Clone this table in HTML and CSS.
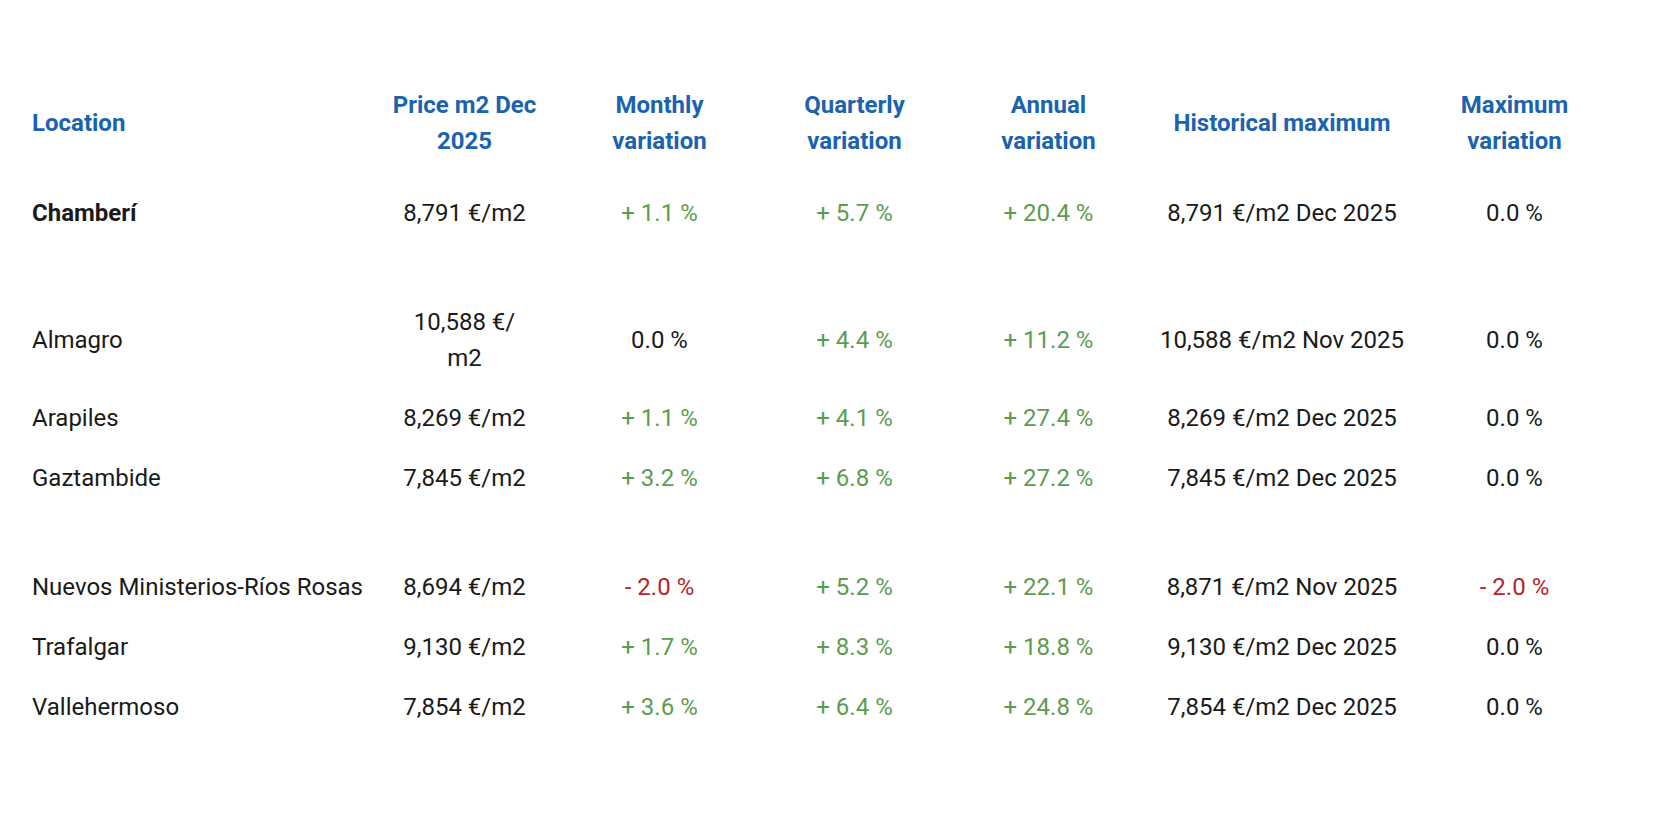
FILE: index.html
```html
<!DOCTYPE html>
<html lang="en">
<head>
<meta charset="utf-8">
<title>Chamberí prices</title>
<link rel="stylesheet" href="styles.css">
</head>
<body>
<table class="prices">
  <colgroup>
    <col class="c-loc">
    <col class="c-price">
    <col class="c-month">
    <col class="c-quarter">
    <col class="c-annual">
    <col class="c-hist">
    <col class="c-max">
  </colgroup>
  <thead>
    <tr class="head">
      <th class="loc">Location</th>
      <th>Price m2 Dec<br>2025</th>
      <th>Monthly<br>variation</th>
      <th>Quarterly<br>variation</th>
      <th>Annual<br>variation</th>
      <th>Historical maximum</th>
      <th>Maximum<br>variation</th>
    </tr>
  </thead>
  <tbody>
    <tr class="row district">
      <td class="loc">Chamberí</td>
      <td>8,791 €/m2</td>
      <td class="up">+ 1.1 %</td>
      <td class="up">+ 5.7 %</td>
      <td class="up">+ 20.4 %</td>
      <td>8,791 €/m2 Dec 2025</td>
      <td>0.0 %</td>
    </tr>
    <tr class="spacer"><td colspan="7"></td></tr>
    <tr class="row">
      <td class="loc">Almagro</td>
      <td>10,588 €/<br>m2</td>
      <td>0.0 %</td>
      <td class="up">+ 4.4 %</td>
      <td class="up">+ 11.2 %</td>
      <td>10,588 €/m2 Nov 2025</td>
      <td>0.0 %</td>
    </tr>
    <tr class="row">
      <td class="loc">Arapiles</td>
      <td>8,269 €/m2</td>
      <td class="up">+ 1.1 %</td>
      <td class="up">+ 4.1 %</td>
      <td class="up">+ 27.4 %</td>
      <td>8,269 €/m2 Dec 2025</td>
      <td>0.0 %</td>
    </tr>
    <tr class="row">
      <td class="loc">Gaztambide</td>
      <td>7,845 €/m2</td>
      <td class="up">+ 3.2 %</td>
      <td class="up">+ 6.8 %</td>
      <td class="up">+ 27.2 %</td>
      <td>7,845 €/m2 Dec 2025</td>
      <td>0.0 %</td>
    </tr>
    <tr class="spacer"><td colspan="7"></td></tr>
    <tr class="row">
      <td class="loc">Nuevos Ministerios-Ríos Rosas</td>
      <td>8,694 €/m2</td>
      <td class="down">- 2.0 %</td>
      <td class="up">+ 5.2 %</td>
      <td class="up">+ 22.1 %</td>
      <td>8,871 €/m2 Nov 2025</td>
      <td class="down">- 2.0 %</td>
    </tr>
    <tr class="row">
      <td class="loc">Trafalgar</td>
      <td>9,130 €/m2</td>
      <td class="up">+ 1.7 %</td>
      <td class="up">+ 8.3 %</td>
      <td class="up">+ 18.8 %</td>
      <td>9,130 €/m2 Dec 2025</td>
      <td>0.0 %</td>
    </tr>
    <tr class="row">
      <td class="loc">Vallehermoso</td>
      <td>7,854 €/m2</td>
      <td class="up">+ 3.6 %</td>
      <td class="up">+ 6.4 %</td>
      <td class="up">+ 24.8 %</td>
      <td>7,854 €/m2 Dec 2025</td>
      <td>0.0 %</td>
    </tr>
  </tbody>
</table>
</body>
</html>
```
FILE: styles.css
```css
html, body {
  margin: 0;
  padding: 0;
  background: #ffffff;
}

body {
  font-family: Roboto, "Noto Sans", "Liberation Sans", sans-serif;
  font-size: 24px;
  line-height: 36px;
  color: #1a1a1a;
}

.prices {
  border-collapse: collapse;
  table-layout: fixed;
  width: 1578px;
  margin: 75px 0 0 32px;
}

.c-loc { width: 335px; }
.c-price { width: 195px; }
.c-month { width: 195px; }
.c-quarter { width: 195px; }
.c-annual { width: 193px; }
.c-hist { width: 274px; }
.c-max { width: 191px; }

.prices th,
.prices td {
  padding: 12px 0;
  text-align: center;
  vertical-align: middle;
  white-space: nowrap;
}

.prices .loc {
  text-align: left;
}

.head th {
  font-weight: 700;
  color: #1b63ae;
  padding-bottom: 24px;
}

.district .loc {
  font-weight: 700;
}

.up {
  color: #5c9c51;
}

.down {
  color: #b3262b;
}

.spacer td {
  padding: 0;
  height: 49px;
}
```
